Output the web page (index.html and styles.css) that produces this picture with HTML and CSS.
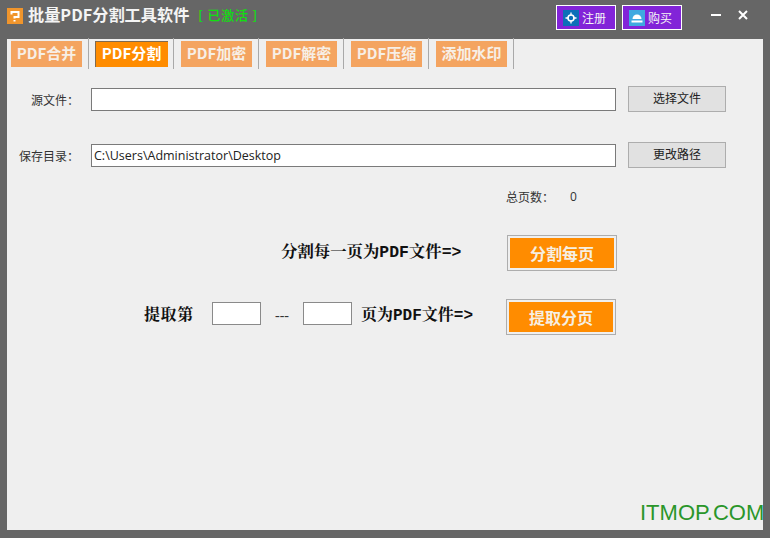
FILE: index.html
```html
<!DOCTYPE html>
<html lang="zh">
<head>
<meta charset="utf-8">
<title>批量PDF分割工具软件</title>
<link rel="stylesheet" href="styles.css">
</head>
<body>
<div class="window">
  <header class="titlebar">
    <svg class="logo" width="16" height="16" viewBox="0 0 16 16"><rect width="16" height="16" fill="#f0952c"/><path d="M4.500 6.500V4h7v5H7.500v1.500M7.500 12v1.500" fill="none" stroke="#fff" stroke-width="2"/></svg>
    <span class="app-title">批量PDF分割工具软件</span>
    <span class="activated">[ 已激活 ]</span>
    <div class="actions">
      <button class="buy-btn"><svg width="16" height="16" viewBox="0 0 16 16"><rect width="16" height="16" fill="#0d6fb8"/><circle cx="8" cy="8" r="3" fill="none" stroke="#fff" stroke-width="1.600"/><path d="M8 2.500v3M8 10.500v3M2.500 8h3M10.500 8h3" stroke="#fff" stroke-width="1.300"/></svg>注册</button>
      <button class="buy-btn"><svg width="16" height="16" viewBox="0 0 16 16"><rect width="16" height="16" fill="#3fa9e0"/><path d="M3.500 9a4.500 4.500 0 0 1 9 0z" fill="#fff"/><rect x="2.500" y="10.500" width="11" height="2" fill="#fff"/></svg>购买</button>
    </div>
    <div class="win-controls">
      <span class="minimize"></span>
      <svg width="10" height="10" viewBox="0 0 10 10"><path d="M1 1l8 8M9 1l-8 8" stroke="#fff" stroke-width="2"/></svg>
    </div>
  </header>
  <main class="panel">
    <nav class="tabs">
      <div class="tab">PDF合并</div>
      <div class="tab active">PDF分割</div>
      <div class="tab">PDF加密</div>
      <div class="tab">PDF解密</div>
      <div class="tab">PDF压缩</div>
      <div class="tab">添加水印</div>
    </nav>
    <div class="form-row first">
      <label class="field-label">源文件：</label>
      <input class="path-input" type="text">
      <button class="gray-btn">选择文件</button>
    </div>
    <div class="form-row second">
      <label class="field-label">保存目录：</label>
      <input class="path-input" type="text" value="C:\Users\Administrator\Desktop">
      <button class="gray-btn">更改路径</button>
    </div>
    <div class="count-row"><span>总页数：</span><span class="count">0</span></div>
    <div class="split-row">
      <span class="big-text split-text">分割每一页为PDF文件=&gt;</span>
      <button class="orange-btn">分割每页</button>
    </div>
    <div class="extract-row">
      <span class="big-text extract-lead">提取第</span>
      <input class="page-input" type="text">
      <span class="dots">---</span>
      <input class="page-input" type="text">
      <span class="big-text extract-tail">页为PDF文件=&gt;</span>
      <button class="orange-btn">提取分页</button>
    </div>
  </main>
  <div class="watermark">ITMOP.COM</div>
</div>
</body>
</html>
```
FILE: styles.css
```css
* { box-sizing: border-box; }
html, body { margin: 0; padding: 0; }
body {
  width: 770px;
  height: 538px;
  overflow: hidden;
  font-family: "Noto Sans CJK SC", "Liberation Sans", sans-serif;
}
button, input { font-family: inherit; padding: 0; margin: 0; border-radius: 0; outline: none; }
.window {
  position: relative;
  width: 770px;
  height: 538px;
  background: #666666;
  padding: 0 7px 8px;
  display: flex;
  flex-direction: column;
}
.titlebar {
  height: 39px;
  flex: none;
  display: flex;
  align-items: flex-start;
  color: #fff;
}
.logo { margin-top: 8px; flex: none; }
.app-title {
  margin: 2px 0 0 5px;
  font-size: 16.200px;
  line-height: 24px;
  font-weight: 700;
  color: #f4f4f4;
}
.activated {
  margin: 6px 0 0 9px;
  font-size: 13px;
  line-height: 18px;
  font-weight: 500;
  color: #10e010;
  letter-spacing: 0.800px;
  white-space: nowrap;
}
.actions { display: flex; gap: 6px; margin: 5px 0 0 auto; }
.buy-btn {
  width: 60px;
  height: 25px;
  background: #8224d8;
  border: 1px solid #fff;
  color: #f5f5f5;
  font-size: 12px;
  display: flex;
  align-items: center;
  justify-content: flex-start;
  padding-left: 6px;
  gap: 3px;
}
.buy-btn svg { flex: none; }
.win-controls { display: flex; align-items: center; gap: 17px; margin: 10px 15px 0 29px; height: 10px; }
.minimize { width: 10px; height: 2px; background: #fff; }
.panel {
  flex: 1;
  background: #efefef;
  display: flex;
  flex-direction: column;
}
.tabs { display: flex; height: 30px; padding-left: 4px; }
.tab {
  width: 71px;
  height: 26px;
  margin: 2px 6px 0 0;
  background: #f4a460;
  color: #f7efe6;
  font-size: 15px;
  font-weight: 700;
  line-height: 23px;
  text-align: center;
  position: relative;
  white-space: nowrap;
}
.tab + .tab { margin-left: 8px; }
.tab::after {
  content: "";
  position: absolute;
  left: 77px;
  top: -3px;
  width: 1px;
  height: 31px;
  background: #a9a9a9;
}
.tab.active {
  width: 73px;
  margin-left: 7px;
  margin-right: 5px;
  background: #ff8c00;
  color: #fff;
  box-shadow: inset 0 1px 0 #7f6a50, inset 1px 0 0 #7f6a50;
}
.tab.active::after { left: 78px; }
.form-row { display: flex; align-items: center; height: 26px; }
.form-row.first { margin-top: 17px; }
.form-row.second { margin-top: 30px; }
.field-label {
  width: 84px;
  flex: none;
  padding-right: 12px;
  text-align: right;
  font-size: 12px;
  color: #333;
  white-space: nowrap;
}
.path-input {
  width: 525px;
  height: 23px;
  flex: none;
  border: 1px solid #7a7a7a;
  background: #fff;
  font-family: "Open Sans", "Liberation Sans", sans-serif;
  font-size: 12.500px;
  color: #222;
  padding-left: 2px;
  margin-top: 1px;
}
.gray-btn {
  width: 98px;
  height: 26px;
  margin-left: 12px;
  padding-bottom: 3px;
  background: #e1e1e1;
  border: 1px solid #adadad;
  font-size: 12px;
  color: #222;
}
.count-row {
  margin: 20px 0 0 499px;
  display: flex;
  font-size: 12px;
  line-height: 18px;
  color: #333;
  gap: 16px;
}
.count { font-family: "Open Sans", "Liberation Sans", sans-serif; }
.big-text {
  font-family: "Liberation Mono", "Noto Serif CJK SC", "Noto Sans CJK SC", serif;
  font-size: 16px;
  font-weight: 700;
  color: #111;
  white-space: nowrap;
}
.split-row { display: flex; align-items: center; margin: 29px 0 0 274px; height: 36px; }
.split-text { width: 226px; margin-top: -6px; font-size: 16.400px; }
.orange-btn {
  width: 110px;
  height: 36px;
  flex: none;
  background: #ff8c00;
  border: 3px solid #efefef;
  outline: 1px solid #adadad;
  outline-offset: -1px;
  padding-bottom: 1px;
  color: #f6efe2;
  font-size: 16px;
  font-weight: 700;
}
.extract-row { display: flex; align-items: center; margin: 28px 0 0 137px; height: 36px; }
.extract-lead { width: 68px; margin-top: -8px; letter-spacing: 0.600px; }
.page-input {
  width: 49px;
  height: 23px;
  border: 1px solid #8a8a8a;
  background: #fff;
  flex: none;
  margin-top: -7px;
}
.dots {
  width: 42px;
  text-align: center;
  font-size: 14px;
  color: #333;
  margin-top: -2px;
  font-family: "Liberation Serif", serif;
}
.extract-tail { width: 145px; margin-left: 9px; margin-top: -8px; }
.watermark {
  position: absolute;
  left: 640px;
  top: 501px;
  font-family: "Liberation Sans", sans-serif;
  font-size: 22px;
  line-height: 24px;
  color: #2a962a;
  white-space: nowrap;
}
```
